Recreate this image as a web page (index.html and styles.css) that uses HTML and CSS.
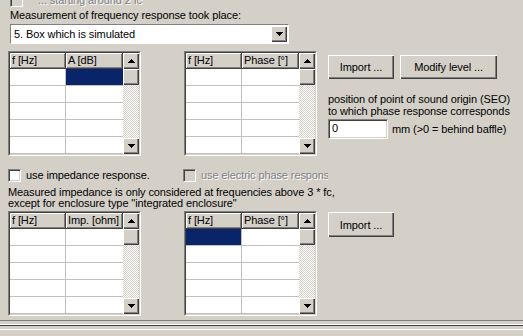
FILE: index.html
```html
<!DOCTYPE html>
<html>
<head>
<meta charset="utf-8">
<title>Measurement of frequency response</title>
<link rel="stylesheet" href="styles.css">
</head>
<body>

<div class="page">

	<div class="cbrow first">
		<span class="check off"></span>
		<span class="dis">... starting around 2 fc</span>
	</div>

	<div class="label">Measurement of frequency response took place:</div>

	<div class="combo">
		<span class="combo-txt">5. Box which is simulated</span>
		<span class="btn combo-btn"><svg width="7" height="4"><path d="M0 0h7v1H6v1H5v1H4v1H3V3H2V2H1V1H0z"/></svg></span>
	</div>

	<!-- frequency + phase response -->
	<div class="section top">
		<div class="grid">
			<div class="grid-in">
				<div class="cells">
					<div class="hd">f [Hz]</div><div class="hd">A [dB]</div>
					<div class="c"></div><div class="c sel"></div>
					<div class="c"></div><div class="c"></div>
					<div class="c"></div><div class="c"></div>
					<div class="c"></div><div class="c"></div>
					<div class="c"></div><div class="c"></div>
				</div>
				<div class="vscroll">
					<div class="btn sb"><svg width="7" height="4"><path d="M3 0h1v1h1v1h1v1h1v1H0V3h1V2h1V1h1z"/></svg></div>
					<div class="btn sb"></div>
					<div class="track"></div>
					<div class="btn sb"><svg width="7" height="4"><path d="M0 0h7v1H6v1H5v1H4v1H3V3H2V2H1V1H0z"/></svg></div>
				</div>
			</div>
		</div>

		<div class="grid">
			<div class="grid-in">
				<div class="cells">
					<div class="hd">f [Hz]</div><div class="hd">Phase [°]</div>
					<div class="c"></div><div class="c"></div>
					<div class="c"></div><div class="c"></div>
					<div class="c"></div><div class="c"></div>
					<div class="c"></div><div class="c"></div>
					<div class="c"></div><div class="c"></div>
				</div>
				<div class="vscroll">
					<div class="btn sb"><svg width="7" height="4"><path d="M3 0h1v1h1v1h1v1h1v1H0V3h1V2h1V1h1z"/></svg></div>
					<div class="btn sb"></div>
					<div class="track"></div>
					<div class="btn sb"><svg width="7" height="4"><path d="M0 0h7v1H6v1H5v1H4v1H3V3H2V2H1V1H0z"/></svg></div>
				</div>
			</div>
		</div>

		<div class="side">
			<div class="buttons">
				<div class="btn push import">Import ...</div>
				<div class="btn push modify">Modify level ...</div>
			</div>
			<div class="note">position of point of sound origin (SEO)<br>to which phase response corresponds</div>
			<div class="seo">
				<div class="field">0</div>
				<span>mm (&gt;0 = behind baffle)</span>
			</div>
		</div>
	</div>

	<div class="cbrow imp">
		<div class="opt">
			<span class="check"></span>
			<span>use impedance response.</span>
		</div>
		<div class="opt clip">
			<span class="check off"></span>
			<span class="dis">use electric phase response</span>
		</div>
	</div>

	<div class="hint">Measured impedance is only considered at frequencies above 3 * fc,<br>except for enclosure type "integrated enclosure"</div>

	<!-- impedance + electric phase -->
	<div class="section bottom">
		<div class="grid">
			<div class="grid-in">
				<div class="cells">
					<div class="hd">f [Hz]</div><div class="hd">Imp. [ohm]</div>
					<div class="c"></div><div class="c"></div>
					<div class="c"></div><div class="c"></div>
					<div class="c"></div><div class="c"></div>
					<div class="c"></div><div class="c"></div>
					<div class="c"></div><div class="c"></div>
				</div>
				<div class="vscroll">
					<div class="btn sb"><svg width="7" height="4"><path d="M3 0h1v1h1v1h1v1h1v1H0V3h1V2h1V1h1z"/></svg></div>
					<div class="btn sb"></div>
					<div class="track"></div>
					<div class="btn sb"><svg width="7" height="4"><path d="M0 0h7v1H6v1H5v1H4v1H3V3H2V2H1V1H0z"/></svg></div>
				</div>
			</div>
		</div>

		<div class="grid">
			<div class="grid-in">
				<div class="cells">
					<div class="hd">f [Hz]</div><div class="hd">Phase [°]</div>
					<div class="c sel"></div><div class="c"></div>
					<div class="c"></div><div class="c"></div>
					<div class="c"></div><div class="c"></div>
					<div class="c"></div><div class="c"></div>
					<div class="c"></div><div class="c"></div>
				</div>
				<div class="vscroll">
					<div class="btn sb"><svg width="7" height="4"><path d="M3 0h1v1h1v1h1v1h1v1H0V3h1V2h1V1h1z"/></svg></div>
					<div class="btn sb"></div>
					<div class="track"></div>
					<div class="btn sb"><svg width="7" height="4"><path d="M0 0h7v1H6v1H5v1H4v1H3V3H2V2H1V1H0z"/></svg></div>
				</div>
			</div>
		</div>

		<div class="side">
			<div class="btn push import low">Import ...</div>
		</div>
	</div>

</div>

<div class="foot">
	<div class="bar1"></div>
	<div class="bar2"></div>
</div>

</body>
</html>
```

FILE: styles.css
```css
body   { margin: 0; height: 336px; overflow: hidden; background: #D4D0C8; color: #000;
         font-family: "Liberation Sans", Arial, sans-serif; font-size: 11px; letter-spacing: -0.1px; }

.page  { margin-top: -6px; padding-left: 8px; }

/* classic 3d bits */
.btn   { background: #D4D0C8; box-sizing: border-box;
         box-shadow: inset 1px 1px #FFF, inset -1px -1px #404040, inset -2px -2px #808080; }
.check { display: inline-block; flex-shrink: 0; width: 13px; height: 13px; box-sizing: border-box; background: #FFF;
         border: 1px solid; border-color: #808080 #FFF #FFF #808080;
         box-shadow: inset 1px 1px #404040, inset -1px -1px #D4D0C8; }
.check.off { background: #D4D0C8; }
.dis   { color: #808080; text-shadow: 1px 1px #FFF; }

.cbrow { display: flex; align-items: center; height: 13px; line-height: 13px; }
.cbrow.first { padding-left: 2px; }
.cbrow.first .check { margin-right: 15px; }

.label { margin-top: 2px; line-height: 13px; padding-left: 2px; }

.combo { margin-top: 2px; margin-left: 2px; width: 279px; height: 20px; box-sizing: border-box; background: #FFF;
         border: 1px solid; border-color: #808080 #FFF #FFF #808080; display: flex; align-items: center; }
.combo-txt { flex: 1; padding-left: 3px; line-height: 16px; }
.combo-btn { width: 16px; height: 16px; margin-right: 1px; display: flex; align-items: center; justify-content: center; }

/* string grids */
.section { display: flex; align-items: flex-start; }
.section.top    { margin-top: 7px; }
.section.bottom { margin-top: 2px; }

.grid    { border: 1px solid; border-color: #808080 #FFF #FFF #808080; }
.grid-in { border: 1px solid; border-color: #404040 #D4D0C8 #D4D0C8 #404040; display: flex; }
.grid + .grid { margin-left: 43px; }

.cells { display: grid; grid-template-columns: 56px 57px; grid-template-rows: 16px repeat(5, 17px); background: #FFF; }
.hd    { background: #D4D0C8; box-sizing: border-box; padding-left: 2px; line-height: 15px;
         border-right: 1px solid #404040; border-bottom: 1px solid #404040;
         box-shadow: inset 1px 1px #FFF, inset -1px -1px #808080; white-space: nowrap; overflow: hidden; }
.c     { background: #FFF; box-sizing: border-box; border-right: 1px solid #C0C0C0; border-bottom: 1px solid #C0C0C0; }
.c:nth-child(even) { border-right: 0; }
.c.sel { background: #0A246A; }

.vscroll { width: 16px; display: flex; flex-direction: column; }
.sb      { height: 16px; display: flex; align-items: center; justify-content: center; }
.track   { flex: 1; background: repeating-conic-gradient(#FFF 0 25%, #D4D0C8 0 50%) 0 0 / 2px 2px; }

/* right hand side */
.side    { margin-left: 11px; }
.buttons { display: flex; margin-top: 4px; }
.push    { height: 24px; display: flex; align-items: center; justify-content: center; }
.import  { width: 66px; }
.modify  { width: 97px; margin-left: 6px; }
.import.low { height: 25px; margin-top: 1px; }

.note    { margin-top: 14px; line-height: 12px; }
.seo     { display: flex; align-items: center; margin-top: 2px; }
.field   { width: 60px; height: 20px; box-sizing: border-box; background: #FFF; padding-left: 3px; line-height: 16px;
           border: 1px solid; border-color: #808080 #FFF #FFF #808080;
           box-shadow: inset 1px 1px #404040, inset -1px -1px #D4D0C8; margin-right: 4px; }

.cbrow.imp { margin-top: 13px; }
.opt       { display: flex; align-items: center; }
.opt .check { margin-right: 5px; }
.opt:first-child { width: 175px; }
.opt.clip  { width: 145px; overflow: hidden; white-space: nowrap; }

.hint  { margin-top: 5px; line-height: 11px; }

/* status bars at the bottom */
.foot  { margin-top: 4px; }
.bar1  { height: 3px; border-top: 1px solid #808080; border-bottom: 1px solid #FFF; }
.bar2  { height: 3px; border-top: 1px solid #404040; border-bottom: 1px solid #FFF; }
```
